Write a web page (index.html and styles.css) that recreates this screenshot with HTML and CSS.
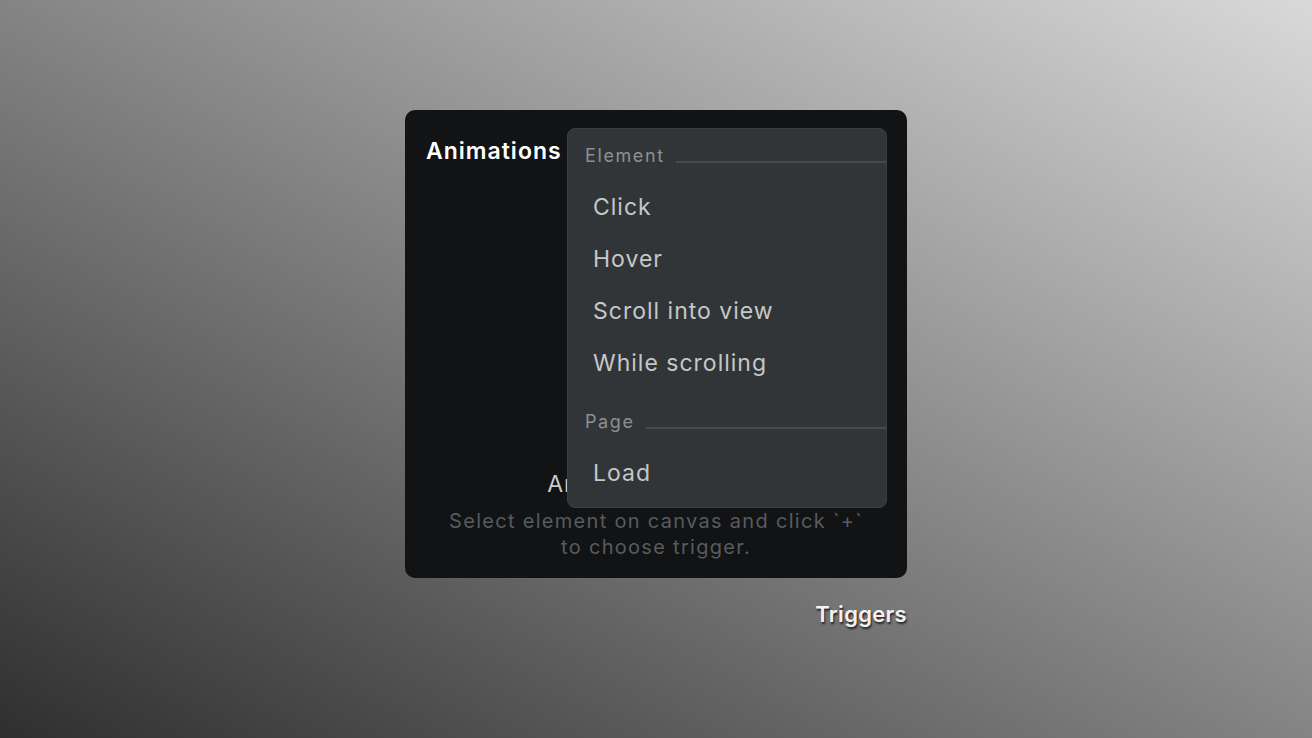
FILE: index.html
```html
<!DOCTYPE html>
<html lang="en">
<head>
  <meta charset="UTF-8">
  <title>Animations</title>
  <link rel="stylesheet" href="styles.css">
</head>
<body>

<div class="stage">
  <div class="panel">
    <h2 class="panel-title">Animations</h2>

    <div class="empty">
      <div class="empty-title">Animation triggers</div>
      <p class="empty-text">Select element on canvas and click `+`<br>to choose trigger.</p>
    </div>

    <div class="menu">
      <div class="menu-group">
        <span class="menu-label">Element</span>
        <span class="menu-rule"></span>
      </div>
      <div class="menu-item">Click</div>
      <div class="menu-item">Hover</div>
      <div class="menu-item">Scroll into view</div>
      <div class="menu-item">While scrolling</div>

      <div class="menu-group page">
        <span class="menu-label">Page</span>
        <span class="menu-rule"></span>
      </div>
      <div class="menu-item">Load</div>
    </div>
  </div>

  <div class="caption">Triggers</div>
</div>

</body>
</html>
```

FILE: styles.css
```css
html, body {
  margin: 0;
  height: 100%;
}

body {
  font-family: Inter, "Noto Sans", sans-serif;
  background: linear-gradient(to top right, #2f2f2f, #d9d9d9);
  overflow: hidden;
}

.stage {
  width: 502px;
  margin: 110px auto 0;
}

.panel {
  position: relative;
  height: 468px;
  box-sizing: border-box;
  padding: 26px 21px 18px;
  background-color: #121315;
  border-radius: 10px;
  display: flex;
  flex-direction: column;
}

.panel-title {
  margin: 0;
  font-size: 23px;
  font-weight: 600;
  line-height: 30px;
  letter-spacing: 1px;
  color: #fff;
}

.empty {
  margin-top: auto;
  text-align: center;
}

.empty-title {
  font-size: 23px;
  line-height: 30px;
  letter-spacing: 1px;
  color: #c9cbcd;
}

.empty-text {
  margin: 9px 0 0;
  font-size: 20px;
  line-height: 26px;
  letter-spacing: 1.3px;
  color: #585b5e;
}

.menu {
  position: absolute;
  left: 162px;
  top: 18px;
  width: 320px;
  height: 380px;
  box-sizing: border-box;
  padding-top: 12px;
  background-color: #323537;
  border: 1px solid #3c3f42;
  border-radius: 8px;
}

.menu-group {
  display: flex;
  align-items: center;
  height: 28px;
  padding-left: 17px;
  margin-bottom: 12px;
}

.menu-group.page {
  margin-top: 18px;
}

.menu-label {
  font-size: 18px;
  letter-spacing: 1.6px;
  color: #8d9093;
}

.menu-rule {
  flex: 1;
  height: 2px;
  margin: 13px 0 0 11px;
  background-color: #484b4e;
}

.menu-item {
  height: 52px;
  line-height: 52px;
  padding-left: 25px;
  font-size: 23px;
  letter-spacing: 1px;
  color: #c5c7c9;
}

.caption {
  margin-top: 23px;
  text-align: right;
  font-size: 22px;
  font-weight: 600;
  letter-spacing: 0.3px;
  color: #f2f2f2;
  text-shadow: 1px 2px 2px rgba(0, 0, 0, 0.7);
}
```
